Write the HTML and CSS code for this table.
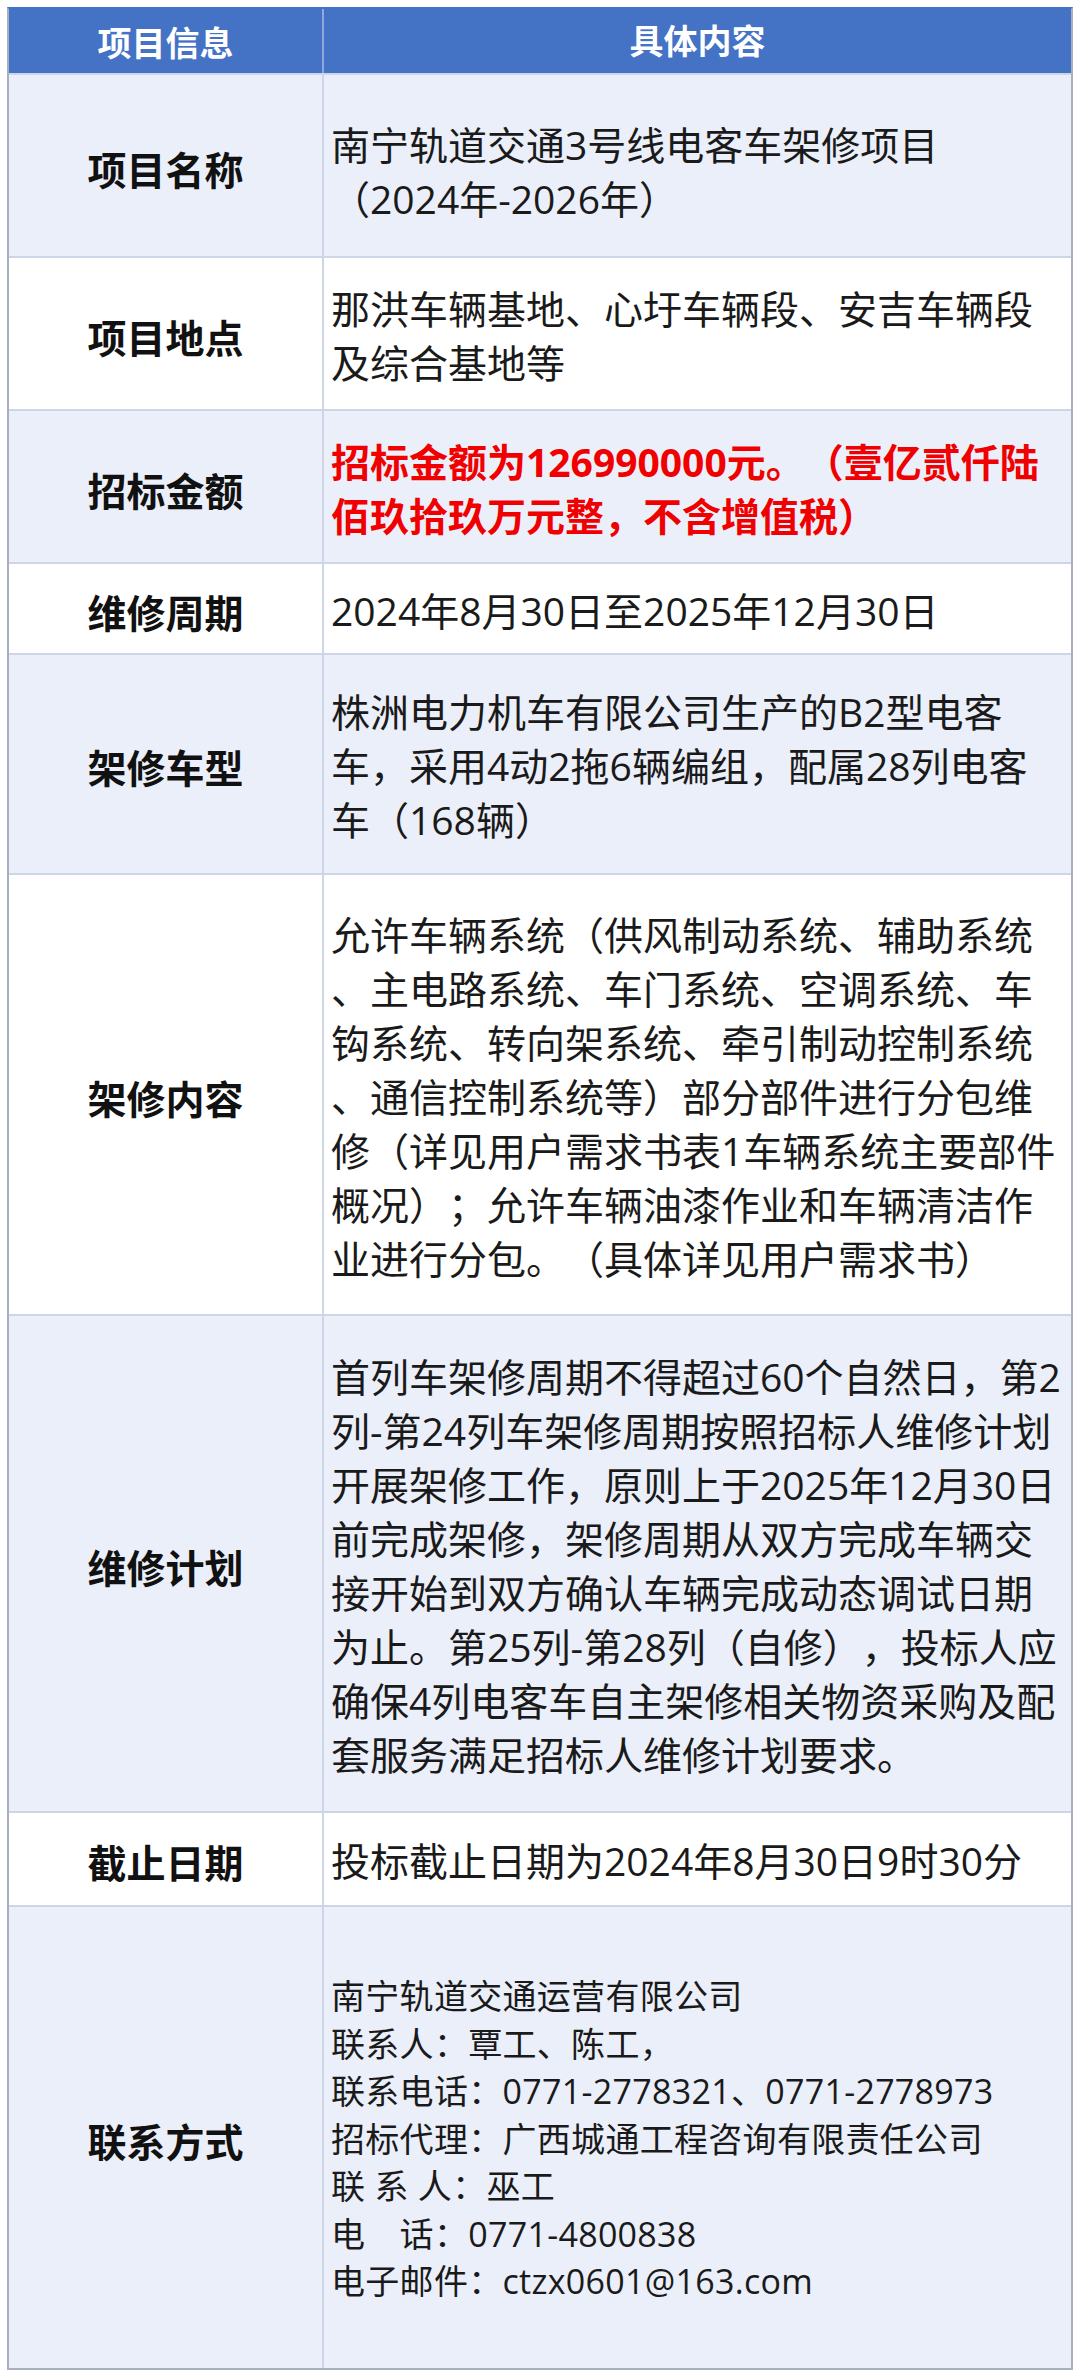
FILE: index.html
```html
<!DOCTYPE html>
<html lang="zh-CN">
<head>
<meta charset="utf-8">
<title>项目信息</title>
<link rel="stylesheet" href="styles.css">
</head>
<body>
<div class="sheet">
  <div class="row head">
    <div class="label">项目信息</div>
    <div class="content">具体内容</div>
  </div>
  <div class="row tint h-name">
    <div class="label">项目名称</div>
    <div class="content shift">南宁轨道交通3号线电客车架修项目<br>（2024年-2026年）</div>
  </div>
  <div class="row h-place">
    <div class="label">项目地点</div>
    <div class="content">那洪车辆基地、心圩车辆段、安吉车辆段<br>及综合基地等</div>
  </div>
  <div class="row tint h-amount">
    <div class="label">招标金额</div>
    <div class="content red">招标金额为126990000元。（壹亿贰仟陆<br>佰玖拾玖万元整，不含增值税）</div>
  </div>
  <div class="row h-period">
    <div class="label">维修周期</div>
    <div class="content">2024年8月30日至2025年12月30日</div>
  </div>
  <div class="row tint h-model">
    <div class="label">架修车型</div>
    <div class="content">株洲电力机车有限公司生产的B2型电客<br>车，采用4动2拖6辆编组，配属28列电客<br>车（168辆）</div>
  </div>
  <div class="row h-scope">
    <div class="label">架修内容</div>
    <div class="content">允许车辆系统（供风制动系统、辅助系统<br>、主电路系统、车门系统、空调系统、车<br>钩系统、转向架系统、牵引制动控制系统<br>、通信控制系统等）部分部件进行分包维<br>修（详见用户需求书表1车辆系统主要部件<br>概况）；允许车辆油漆作业和车辆清洁作<br>业进行分包。（具体详见用户需求书）</div>
  </div>
  <div class="row tint h-plan">
    <div class="label">维修计划</div>
    <div class="content">首列车架修周期不得超过60个自然日，第2<br>列-第24列车架修周期按照招标人维修计划<br>开展架修工作，原则上于2025年12月30日<br>前完成架修，架修周期从双方完成车辆交<br>接开始到双方确认车辆完成动态调试日期<br>为止。第25列-第28列（自修），投标人应<br>确保4列电客车自主架修相关物资采购及配<br>套服务满足招标人维修计划要求。</div>
  </div>
  <div class="row h-deadline">
    <div class="label">截止日期</div>
    <div class="content">投标截止日期为2024年8月30日9时30分</div>
  </div>
  <div class="row tint h-contact">
    <div class="label">联系方式</div>
    <div class="content small">南宁轨道交通运营有限公司<br>联系人：覃工、陈工，<br>联系电话：0771-2778321、0771-2778973<br>招标代理：广西城通工程咨询有限责任公司<br>联 系 人：巫工<br>电　话：0771-4800838<br>电子邮件：ctzx0601@163.com</div>
  </div>
</div>
</body>
</html>
```

FILE: styles.css
```css
html, body {
  margin: 0;
  padding: 0;
  background: #ffffff;
}

body {
  font-family: "Open Sans", "Noto Sans CJK SC", sans-serif;
  color: #1a1a1a;
  text-spacing-trim: space-all;
}

.sheet {
  box-sizing: border-box;
  width: 1066px;
  margin: 7px 0 0 7px;
  border: 2px solid #a8b0c0;
  border-top-color: #4472c4;
}

.row {
  box-sizing: border-box;
  display: flex;
  border-top: 2px solid #cdd5e6;
  background: #ffffff;
}

.row.tint {
  background: #ebeff9;
}

.label {
  box-sizing: border-box;
  flex: 0 0 315px;
  border-right: 2px solid #cdd5e6;
  display: flex;
  align-items: center;
  justify-content: center;
  font-size: 39px;
  font-weight: 700;
  color: #111111;
  padding-top: 4px;
}

.content {
  box-sizing: border-box;
  flex: 1 1 auto;
  display: flex;
  align-items: center;
  padding: 4px 0 0 7px;
  font-size: 39px;
  line-height: 54px;
  white-space: nowrap;
  text-spacing-trim: space-all;
}

.content.shift {
  padding-top: 12px;
}

.content.red {
  color: #f00000;
  font-weight: 700;
}

.content.small {
  font-size: 34px;
  line-height: 47.5px;
  letter-spacing: 0.3px;
}

.row.head {
  border-top: none;
  height: 64px;
  background: #4472c4;
}

.row.head .label,
.row.head .content {
  color: #ffffff;
  font-size: 34px;
  font-weight: 700;
  padding: 0;
  justify-content: center;
}

.row.head .label {
  border-right-color: #8fa9dc;
}

.h-name { height: 183px; }
.h-place { height: 153px; }
.h-amount { height: 153px; }
.h-period { height: 91px; }
.h-model { height: 220px; }
.h-scope { height: 441px; }
.h-plan { height: 497px; }
.h-deadline { height: 94px; }
.h-contact { height: 463px; }
```
